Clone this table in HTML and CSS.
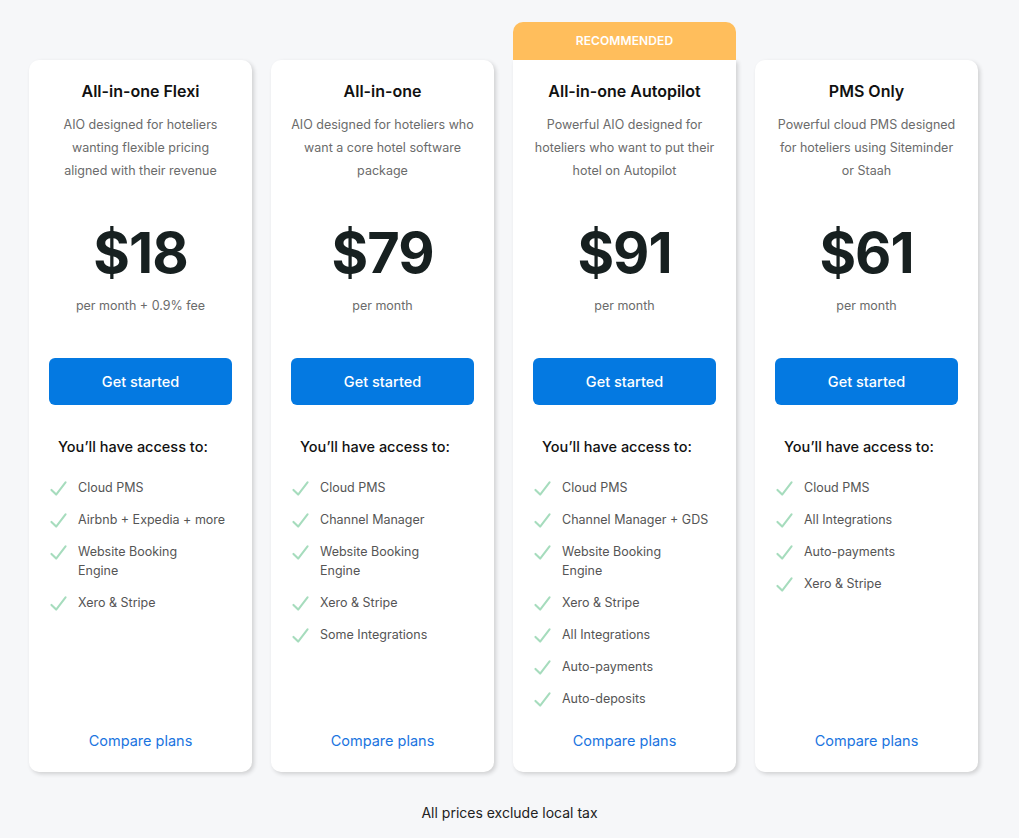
FILE: index.html
```html
<!DOCTYPE html>
<html lang="en">
<head>
<meta charset="utf-8">
<title>Pricing</title>
<link rel="stylesheet" href="styles.css">
</head>
<body>
<main class="page">
  <div class="plans">
    <section class="card">
      <h2 class="title">All-in-one Flexi</h2>
      <p class="desc">AIO designed for hoteliers wanting flexible pricing aligned with their revenue</p>
      <div class="price">$18</div>
      <div class="period">per month + 0.9% fee</div>
      <a class="btn" href="#">Get started</a>
      <h3 class="access">You’ll have access to:</h3>
      <ul class="features">
        <li><svg class="chk" viewBox="0 0 18 16"><path d="M1.5 9.5 L6.5 14.5 L16.5 1.5" /></svg><span>Cloud PMS</span></li>
        <li><svg class="chk" viewBox="0 0 18 16"><path d="M1.5 9.5 L6.5 14.5 L16.5 1.5" /></svg><span>Airbnb + Expedia + more</span></li>
        <li><svg class="chk" viewBox="0 0 18 16"><path d="M1.5 9.5 L6.5 14.5 L16.5 1.5" /></svg><span>Website Booking<br>Engine</span></li>
        <li><svg class="chk" viewBox="0 0 18 16"><path d="M1.5 9.5 L6.5 14.5 L16.5 1.5" /></svg><span>Xero &amp; Stripe</span></li>
      </ul>
      <a class="compare" href="#">Compare plans</a>
    </section>
    <section class="card">
      <h2 class="title">All-in-one</h2>
      <p class="desc">AIO designed for hoteliers who want a core hotel software package</p>
      <div class="price">$79</div>
      <div class="period">per month</div>
      <a class="btn" href="#">Get started</a>
      <h3 class="access">You’ll have access to:</h3>
      <ul class="features">
        <li><svg class="chk" viewBox="0 0 18 16"><path d="M1.5 9.5 L6.5 14.5 L16.5 1.5" /></svg><span>Cloud PMS</span></li>
        <li><svg class="chk" viewBox="0 0 18 16"><path d="M1.5 9.5 L6.5 14.5 L16.5 1.5" /></svg><span>Channel Manager</span></li>
        <li><svg class="chk" viewBox="0 0 18 16"><path d="M1.5 9.5 L6.5 14.5 L16.5 1.5" /></svg><span>Website Booking<br>Engine</span></li>
        <li><svg class="chk" viewBox="0 0 18 16"><path d="M1.5 9.5 L6.5 14.5 L16.5 1.5" /></svg><span>Xero &amp; Stripe</span></li>
        <li><svg class="chk" viewBox="0 0 18 16"><path d="M1.5 9.5 L6.5 14.5 L16.5 1.5" /></svg><span>Some Integrations</span></li>
      </ul>
      <a class="compare" href="#">Compare plans</a>
    </section>
    <section class="card recommended">
      <div class="badge">RECOMMENDED</div>
      <h2 class="title">All-in-one Autopilot</h2>
      <p class="desc">Powerful AIO designed for hoteliers who want to put their hotel on Autopilot</p>
      <div class="price">$91</div>
      <div class="period">per month</div>
      <a class="btn" href="#">Get started</a>
      <h3 class="access">You’ll have access to:</h3>
      <ul class="features">
        <li><svg class="chk" viewBox="0 0 18 16"><path d="M1.5 9.5 L6.5 14.5 L16.5 1.5" /></svg><span>Cloud PMS</span></li>
        <li><svg class="chk" viewBox="0 0 18 16"><path d="M1.5 9.5 L6.5 14.5 L16.5 1.5" /></svg><span>Channel Manager + GDS</span></li>
        <li><svg class="chk" viewBox="0 0 18 16"><path d="M1.5 9.5 L6.5 14.5 L16.5 1.5" /></svg><span>Website Booking<br>Engine</span></li>
        <li><svg class="chk" viewBox="0 0 18 16"><path d="M1.5 9.5 L6.5 14.5 L16.5 1.5" /></svg><span>Xero &amp; Stripe</span></li>
        <li><svg class="chk" viewBox="0 0 18 16"><path d="M1.5 9.5 L6.5 14.5 L16.5 1.5" /></svg><span>All Integrations</span></li>
        <li><svg class="chk" viewBox="0 0 18 16"><path d="M1.5 9.5 L6.5 14.5 L16.5 1.5" /></svg><span>Auto-payments</span></li>
        <li><svg class="chk" viewBox="0 0 18 16"><path d="M1.5 9.5 L6.5 14.5 L16.5 1.5" /></svg><span>Auto-deposits</span></li>
      </ul>
      <a class="compare" href="#">Compare plans</a>
    </section>
    <section class="card">
      <h2 class="title">PMS Only</h2>
      <p class="desc">Powerful cloud PMS designed for hoteliers using Siteminder or Staah</p>
      <div class="price">$61</div>
      <div class="period">per month</div>
      <a class="btn" href="#">Get started</a>
      <h3 class="access">You’ll have access to:</h3>
      <ul class="features">
        <li><svg class="chk" viewBox="0 0 18 16"><path d="M1.5 9.5 L6.5 14.5 L16.5 1.5" /></svg><span>Cloud PMS</span></li>
        <li><svg class="chk" viewBox="0 0 18 16"><path d="M1.5 9.5 L6.5 14.5 L16.5 1.5" /></svg><span>All Integrations</span></li>
        <li><svg class="chk" viewBox="0 0 18 16"><path d="M1.5 9.5 L6.5 14.5 L16.5 1.5" /></svg><span>Auto-payments</span></li>
        <li><svg class="chk" viewBox="0 0 18 16"><path d="M1.5 9.5 L6.5 14.5 L16.5 1.5" /></svg><span>Xero &amp; Stripe</span></li>
      </ul>
      <a class="compare" href="#">Compare plans</a>
    </section>
  </div>
  <p class="note">All prices exclude local tax</p>
</main>
</body>
</html>
```

FILE: styles.css
```css
* { box-sizing: border-box; }
html, body { margin: 0; padding: 0; }
body {
  background: #f6f7f9;
  font-family: Inter, "Noto Sans", "Liberation Sans", sans-serif;
  color: #1a1a1a;
  width: 1019px;
  height: 838px;
  overflow: hidden;
}
.page {
  padding: 60px 0 0 29px;
}
.plans {
  display: flex;
  gap: 19px;
  align-items: stretch;
}
.card {
  position: relative;
  width: 223px;
  background: #fff;
  border-radius: 10px;
  box-shadow: 2px 2px 4px rgba(0, 0, 0, 0.16);
  padding: 21px 20px 21px;
  display: flex;
  flex-direction: column;
  text-align: center;
}
.recommended { border-top-left-radius: 0; border-top-right-radius: 0; }
.badge {
  position: absolute;
  left: 0;
  right: 0;
  bottom: 100%;
  height: 38px;
  background: #ffbe5c;
  border-radius: 10px 10px 0 0;
  color: #fff;
  font-size: 12px;
  font-weight: 600;
  line-height: 38px;
  letter-spacing: 0.1px;
}
.title {
  margin: 0;
  font-size: 16px;
  line-height: 20px;
  font-weight: 600;
  color: #111;
}
.desc {
  margin: 12px 0 0;
  font-size: 12.5px;
  line-height: 23px;
  color: #6b6b6b;
}
.price {
  margin-top: 39px;
  font-size: 56px;
  line-height: 64px;
  font-weight: 700;
  color: #172020;
  letter-spacing: -1px;
}
.period {
  margin-top: 11px;
  font-size: 12.5px;
  line-height: 20px;
  color: #6b6b6b;
}
.btn {
  display: block;
  margin-top: 42px;
  height: 47px;
  line-height: 47px;
  background: #0479e1;
  color: #fff;
  border-radius: 6px;
  font-size: 14.5px;
  font-weight: 500;
  text-decoration: none;
}
.access {
  margin: 32px 0 0;
  padding-left: 9px;
  text-align: left;
  font-size: 14.5px;
  line-height: 20px;
  font-weight: 500;
  color: #111;
}
.features {
  list-style: none;
  margin: 21px 0 0;
  padding: 0;
  text-align: left;
}
.features li {
  display: flex;
  align-items: flex-start;
  gap: 11px;
  font-size: 12.5px;
  line-height: 19px;
  color: #555;
  margin-bottom: 13px;
}
.features li:last-child { margin-bottom: 0; }
.features li span { max-width: 160px; }
.chk {
  flex: none;
  width: 17px;
  height: 15px;
  margin: 3px 0 0 1px;
  fill: none;
  stroke: #a6dcbd;
  stroke-width: 2.2;
  stroke-linecap: round;
  stroke-linejoin: round;
}
.compare {
  margin-top: auto;
  padding-top: 23px;
  font-size: 14.5px;
  line-height: 20px;
  color: #1a74e0;
  text-decoration: none;
}
.note {
  margin: 31px 0 0;
  padding-right: 29px;
  text-align: center;
  font-size: 14px;
  line-height: 20px;
  color: #222;
}
```
